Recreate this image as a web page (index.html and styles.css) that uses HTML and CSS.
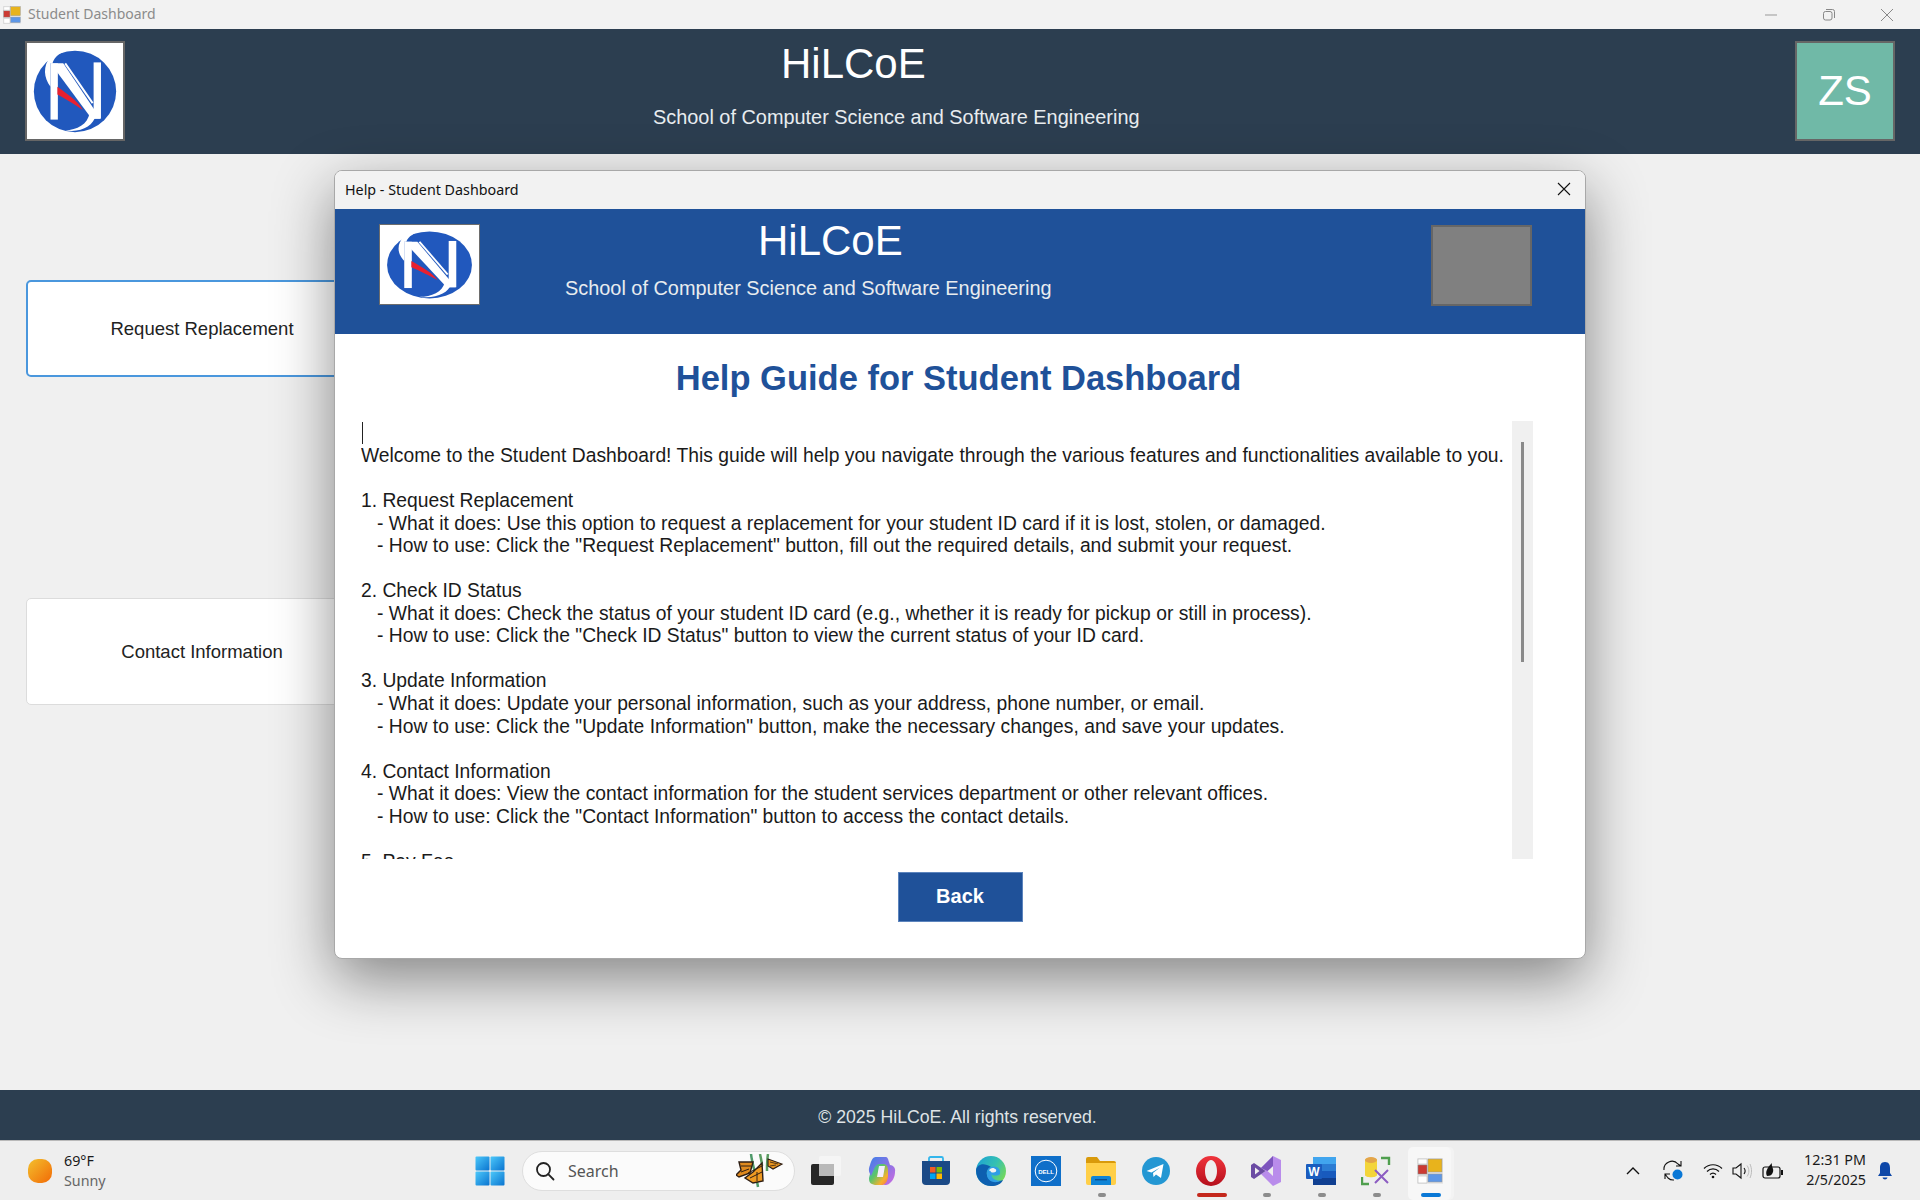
FILE: index.html
```html
<!DOCTYPE html>
<html>
<head>
<title>Student Dashboard</title>
<meta charset="UTF-8">
<link rel="stylesheet" href="styles.css">
</head>
<body>
<svg class="defs" width="0" height="0">
  <defs>
    <symbol id="logo" viewBox="0 0 98 99" preserveAspectRatio="none">
      <rect width="98" height="99" fill="#fff"/>
      <circle cx="49" cy="50" r="42" fill="#2158bd"/>
      <path d="M24 45C17 36 16 24 24 14C29 9 36 7 42 7C34 10 28 14 26 21H24Z" fill="#fff"/>
      <path d="M39 90C51 90 62 84 64 72L70 75C68 85 55 93 39 90Z" fill="#fff"/>
      <rect x="24" y="21" width="7.5" height="58" fill="#fff"/>
      <rect x="68" y="20" width="7.5" height="58" fill="#fff"/>
      <polygon points="24,21 37,21 75,78 66,78" fill="#fff"/>
      <line x1="39" y1="21" x2="67" y2="62" stroke="#fff" stroke-width="2"/>
      <path d="M31 45C42 53 52 60 57 69C50 64 40 58 31 53Z" fill="#e8202f"/>
    </symbol>
    <symbol id="appicon" viewBox="0 0 26 26">
      <rect x="0" y="0" width="26" height="26" fill="#e8e8e8"/>
      <rect x="1" y="7" width="9" height="9" fill="#cc3a33" stroke="#888" stroke-width=".6"/>
      <rect x="11" y="1" width="14" height="13" fill="#e8b31c" stroke="#999" stroke-width=".6"/>
      <rect x="11" y="16" width="14" height="8" fill="#5e97e6" stroke="#999" stroke-width=".6"/>
      <path d="M1 1H10V6H1ZM1 18H10V25H1Z" fill="#fff" stroke="#bbb" stroke-width=".6"/>
    </symbol>
    <linearGradient id="win" x1="0" y1="0" x2="1" y2="1"><stop offset="0" stop-color="#4cc8fa"/><stop offset="1" stop-color="#0a74d0"/></linearGradient>
    <linearGradient id="sun" x1="0" y1="0" x2="1" y2="1"><stop offset="0" stop-color="#f3c02d"/><stop offset="1" stop-color="#f26a06"/></linearGradient>
    <linearGradient id="copilot" x1="0" y1="0" x2="1" y2="1"><stop offset="0" stop-color="#2aa8ee"/><stop offset=".45" stop-color="#5cc46a"/><stop offset=".72" stop-color="#f8b02c"/><stop offset="1" stop-color="#ee4f6e"/></linearGradient>
    <linearGradient id="copilot2" x1="0" y1="0" x2="1" y2="1"><stop offset="0" stop-color="#3f7fe8"/><stop offset="1" stop-color="#d06ae0"/></linearGradient>
    <linearGradient id="edge" x1="0" y1="0" x2="1" y2=".6"><stop offset="0" stop-color="#1a9fd8"/><stop offset=".6" stop-color="#35c1b1"/><stop offset="1" stop-color="#71d75d"/></linearGradient>
    <linearGradient id="opera" x1="0" y1="0" x2="0" y2="1"><stop offset="0" stop-color="#f0343c"/><stop offset="1" stop-color="#b50f1c"/></linearGradient>
  </defs>
</svg>

<div class="window">
  <div class="titlebar">
    <svg class="title-icon"><use href="#appicon"/></svg>
    <span class="title-text">Student Dashboard</span>
    <div class="win-controls">
      <svg width="14" height="14" viewBox="0 0 14 14"><line x1="1" y1="7" x2="13" y2="7" stroke="#999"/></svg>
      <svg width="14" height="14" viewBox="0 0 14 14"><rect x="1.5" y="3.5" width="8.5" height="8.5" rx="2" fill="none" stroke="#888"/><path d="M4 1.5H10.5A2 2 0 0 1 12.5 3.5V10" fill="none" stroke="#888"/></svg>
      <svg width="14" height="14" viewBox="0 0 14 14"><path d="M1 1L13 13M13 1L1 13" stroke="#888"/></svg>
    </div>
  </div>

  <div class="header">
    <svg class="logo"><use href="#logo"/></svg>
    <div class="brand">
      <div class="brand-name">HiLCoE</div>
      <div class="brand-sub">School of Computer Science and Software Engineering</div>
    </div>
    <div class="avatar">ZS</div>
  </div>

  <div class="main">
    <button class="nav-btn nav-btn-focus">Request Replacement</button>
    <button class="nav-btn">Contact Information</button>
  </div>

  <div class="footer">© 2025 HiLCoE. All rights reserved.</div>
</div>

<div class="dialog">
  <div class="dialog-title">
    <span>Help - Student Dashboard</span>
    <svg width="14" height="14" viewBox="0 0 14 14"><path d="M1 1L13 13M13 1L1 13" stroke="#111" stroke-width="1.1"/></svg>
  </div>
  <div class="dialog-head">
    <svg class="dialog-logo"><use href="#logo"/></svg>
    <div class="dialog-brand">
      <div class="dialog-name">HiLCoE</div>
      <div class="dialog-sub">School of Computer Science and Software Engineering</div>
    </div>
    <div class="dialog-photo"></div>
  </div>
  <h1 class="help-title">Help Guide for Student Dashboard</h1>
  <div class="help-box">
    <div class="help-text"><span class="caret"></span>
<pre class="help-pre">Welcome to the Student Dashboard! This guide will help you navigate through the various features and functionalities available to you.

1. Request Replacement
   - What it does: Use this option to request a replacement for your student ID card if it is lost, stolen, or damaged.
   - How to use: Click the "Request Replacement" button, fill out the required details, and submit your request.

2. Check ID Status
   - What it does: Check the status of your student ID card (e.g., whether it is ready for pickup or still in process).
   - How to use: Click the "Check ID Status" button to view the current status of your ID card.

3. Update Information
   - What it does: Update your personal information, such as your address, phone number, or email.
   - How to use: Click the "Update Information" button, make the necessary changes, and save your updates.

4. Contact Information
   - What it does: View the contact information for the student services department or other relevant offices.
   - How to use: Click the "Contact Information" button to access the contact details.

5. Pay Fee</pre>
    </div>
    <div class="scrollbar"><div class="scroll-thumb"></div></div>
  </div>
  <div class="dialog-actions"><button class="back-btn">Back</button></div>
</div>

<div class="taskbar">
  <div class="weather">
    <svg width="24" height="24" viewBox="0 0 24 24"><rect width="24" height="24" rx="10" fill="url(#sun)"/></svg>
    <div class="weather-text">
      <div class="temp">69°F</div>
      <div class="cond">Sunny</div>
    </div>
  </div>

  <div class="task-btn">
    <svg width="30" height="30" viewBox="0 0 30 30"><rect x="0.5" y="0.5" width="14" height="14" rx="1" fill="url(#win)"/><rect x="15.5" y="0.5" width="14" height="14" rx="1" fill="url(#win)"/><rect x="0.5" y="15.5" width="14" height="14" rx="1" fill="url(#win)"/><rect x="15.5" y="15.5" width="14" height="14" rx="1" fill="url(#win)"/></svg>
  </div>

  <div class="search">
    <svg width="20" height="20" viewBox="0 0 20 20"><circle cx="8.5" cy="8.5" r="6.5" fill="none" stroke="#222" stroke-width="1.8"/><line x1="13.2" y1="13.2" x2="18.5" y2="18.5" stroke="#222" stroke-width="1.8" stroke-linecap="round"/></svg>
    <span class="search-text">Search</span>
    <svg class="butterflies" width="50" height="34" viewBox="0 0 50 34">
      <path d="M15 0C16 10 20 20 22 33" fill="none" stroke="#4f9a6a" stroke-width="2.5"/>
      <path d="M24 0C25 5 26 8 26 12M32 0C31 6 31 12 31 17" fill="none" stroke="#5b9d62" stroke-width="2.5"/>
      <path d="M3 8L17 8L14 19L3 23L0 21L5 16Z" fill="#e08a1e" stroke="#2e1e14" stroke-width="1.4"/>
      <path d="M26 9L27 27L17 29L9 24L17 18Z" fill="#ee9a22" stroke="#2e1e14" stroke-width="1.4"/>
      <path d="M12 19L26 12M14 24L26 18M21 18V27" stroke="#2e1e14" stroke-width="1"/>
      <path d="M5 12L15 12M5 18L13 15" stroke="#2e1e14" stroke-width="1"/>
      <path d="M32 5L46 10L37 15L32 12Z" fill="#e8951f" stroke="#2e1e14" stroke-width="1.1"/>
      <path d="M34 8L42 10M34 12L40 11" stroke="#2e1e14" stroke-width=".8"/>
    </svg>
  </div>

  <div class="task-apps">
    <div class="task-btn">
      <svg width="30" height="30" viewBox="0 0 30 30"><rect x="0" y="8" width="23" height="21" rx="2" fill="#262626"/><rect x="8" y="0" width="22" height="20" rx="2" fill="#f6f6f6" opacity=".85"/><rect x="8" y="8" width="15" height="12" fill="#b9b9b9"/></svg>
    </div>
    <div class="task-btn">
      <svg width="30" height="30" viewBox="0 0 30 30"><path d="M11 1H18C20 1 21 3 22 6L26 20C24 27 20 29 15 29H9C4 28 3 26 3 22L7 6C8 3 9 1 11 1Z" fill="url(#copilot)"/><path d="M10 1H19C22 1 22 3 23 6L24 9C27 9 30 12 29 16C29 20 27 25 24 27C22 29 20 29 19 29H17C20 28 22 24 22 20V14C22 10 20 8 17 8H14C11 8 9 10 8 13L5 20C3 16 2 14 4 9C5 6 6 1 10 1Z" fill="url(#copilot2)"/><path d="M13 10H19L17 21H11Z" fill="#f3eefc"/></svg>
    </div>
    <div class="task-btn">
      <svg width="30" height="30" viewBox="0 0 30 30"><path d="M8 6V2.5A1.5 1.5 0 0 1 9.5 1H20.5A1.5 1.5 0 0 1 22 2.5V6" fill="none" stroke="#33b6ec" stroke-width="1.8"/><path d="M1 5H29V25A4 4 0 0 1 25 29H5A4 4 0 0 1 1 25Z" fill="#1b4a86"/><rect x="9" y="11" width="5.5" height="5.5" fill="#ef5a24"/><rect x="15.5" y="11" width="5.5" height="5.5" fill="#7fba00"/><rect x="9" y="17.5" width="5.5" height="5.5" fill="#00a4ef"/><rect x="15.5" y="17.5" width="5.5" height="5.5" fill="#ffb900"/></svg>
    </div>
    <div class="task-btn">
      <svg width="30" height="30" viewBox="0 0 30 30"><circle cx="15" cy="15" r="15" fill="url(#edge)"/><path d="M0 14C0 24 7 30 15 30C21 30 25 28 27 24C20 27 12 25 11 19C10 15 12 12 15 11C8 6 1 8 0 14Z" fill="#0d5fb0"/><path d="M15 11C20 9 25 12 24 18C22 20 17 20 15.5 18C15 22 19 25 25 24.5C20 28 12 26 11 19.5C10.5 15 12 12 15 11Z" fill="#2f9ee6"/><path d="M13 14.5C14 11.5 18 11 20 13.5C21 15.5 19 17 16 16.5C15 16.2 14.5 15.5 14.5 15Z" fill="#f2f2f2"/></svg>
    </div>
    <div class="task-btn">
      <svg width="30" height="30" viewBox="0 0 30 30"><rect width="30" height="30" fill="#0f6fc9"/><circle cx="15" cy="15" r="10.8" fill="none" stroke="#fff" stroke-width="1"/><text x="15" y="17.5" text-anchor="middle" class="dell-text">DELL</text></svg>
    </div>
    <div class="task-btn">
      <svg width="30" height="30" viewBox="0 0 30 30"><path d="M0 3A2 2 0 0 1 2 1H11L14 5H28A2 2 0 0 1 30 7V10H0Z" fill="#d99a0b"/><path d="M0 7H30V27A2 2 0 0 1 28 29H2A2 2 0 0 1 0 27Z" fill="#ffcf48"/><path d="M5 29V22A2 2 0 0 1 7 20H23A2 2 0 0 1 25 22V29Z" fill="#0f84d6"/><rect x="9" y="23" width="12" height="1.4" fill="#0b4f90"/></svg>
      <span class="run-dot"></span>
    </div>
    <div class="task-btn">
      <svg width="30" height="30" viewBox="0 0 30 30"><circle cx="15" cy="15" r="14" fill="#2497d3"/><path d="M5.5 15L22.5 8L20 22L15 18.5L12.5 21L12 17L19 11.5L10.5 16.5Z" fill="#fff"/></svg>
    </div>
    <div class="task-btn">
      <svg width="30" height="30" viewBox="0 0 30 30"><path fill-rule="evenodd" d="M15 0A15 15 0 0 1 15 30A15 15 0 0 1 15 0ZM15 4C11.5 4 9 9 9 15C9 21 11.5 26 15 26C18.5 26 21 21 21 15C21 9 18.5 4 15 4Z" fill="url(#opera)"/></svg>
      <span class="run-dot run-dot-red"></span>
    </div>
    <div class="task-btn">
      <svg width="30" height="30" viewBox="0 0 30 30"><path d="M22 0L30 4V26L22 30L10 18L14.5 15L10 12ZM22 10L16.5 15L22 20Z" fill="#b98ceb"/><path d="M3 7L11 12.5L14.5 15L11 17.5L3 23L0 21V9ZM4 11.5V18.5L8.5 15Z" fill="#6b4ba3"/><path d="M22 0L10 12L16.5 15L22 10Z" fill="#7d55bd"/></svg>
      <span class="run-dot"></span>
    </div>
    <div class="task-btn">
      <svg width="30" height="30" viewBox="0 0 30 30"><rect x="7" y="1" width="23" height="7" fill="#41a5ee"/><rect x="7" y="8" width="23" height="7" fill="#2b7cd3"/><rect x="7" y="15" width="23" height="7" fill="#185abd"/><rect x="7" y="22" width="23" height="7" fill="#103f91"/><rect x="0" y="8" width="16" height="15" rx="1" fill="#1a5cbe"/><text x="8" y="20" text-anchor="middle" class="word-text">W</text></svg>
      <span class="run-dot"></span>
    </div>
    <div class="task-btn">
      <svg width="30" height="30" viewBox="0 0 30 30"><path d="M4 4C4 1 16 1 16 4V19C16 22 4 22 4 19Z" fill="#f3d53a"/><ellipse cx="10" cy="4" rx="6" ry="3" fill="#e3a54a"/><path d="M20 2H28V9M1 21V28H8" fill="none" stroke="#4f9f4e" stroke-width="2.4"/><path d="M14 14L27 27M27 14L14 27" stroke="#8c5cc2" stroke-width="2"/></svg>
      <span class="run-dot"></span>
    </div>
    <div class="task-btn task-btn-active">
      <svg width="26" height="26"><use href="#appicon"/></svg>
      <span class="run-dot run-dot-blue"></span>
    </div>
  </div>

  <div class="tray">
    <svg class="tray-chevron" width="14" height="9" viewBox="0 0 14 9"><path d="M1 8L7 2L13 8" fill="none" stroke="#111" stroke-width="1.4"/></svg>
    <svg class="tray-sync" width="22" height="22" viewBox="0 0 22 22"><path d="M2 10A8 8 0 0 1 16 4L19 6M19 1V6H14M3 19V14H8M3 14L6 18A8 8 0 0 0 12 20" fill="none" stroke="#111" stroke-width="1.1"/><circle cx="15.5" cy="14.5" r="5" fill="#0a78d6"/></svg>
    <svg class="tray-wifi" width="20" height="16" viewBox="0 0 20 16"><path d="M1 5.5C6 .5 14 .5 19 5.5M4 8.5C7.5 5 12.5 5 16 8.5M7 11.5C8.8 9.8 11.2 9.8 13 11.5" fill="none" stroke="#111" stroke-width="1.2"/><circle cx="10" cy="14" r="1.3" fill="#111"/></svg>
    <svg class="tray-vol" width="20" height="18" viewBox="0 0 20 18"><path d="M1 6H4L9 2V16L4 12H1Z" fill="none" stroke="#111" stroke-width="1.1"/><path d="M12 6C13.5 8 13.5 10 12 12" fill="none" stroke="#111" stroke-width="1.1"/><path d="M15 3.5C17.5 7 17.5 11 15 14.5M18 2C20 7 20 11 18 16" fill="none" stroke="#bbb" stroke-width="1"/></svg>
    <svg class="tray-batt" width="22" height="18" viewBox="0 0 22 18"><rect x="1" y="5" width="17" height="11" rx="2" fill="none" stroke="#111" stroke-width="1.2"/><rect x="19" y="8" width="2" height="5" fill="#111"/><path d="M5 14C3 10 5 6 10 1C9 5 12 6 11 10C10 13 8 14 5 14Z" fill="#111"/></svg>
    <div class="clock">
      <div>12:31 PM</div>
      <div>2/5/2025</div>
    </div>
    <svg class="tray-bell" width="16" height="20" viewBox="0 0 16 20"><path d="M8 1C4 1 3 4 3 7V12L1 15H15L13 12V7C13 4 12 1 8 1Z" fill="#0d47a8"/><path d="M5.5 16.5H10.5C10 19 6 19 5.5 16.5Z" fill="#0d47a8"/></svg>
  </div>
</div>
</body>
</html>
```

FILE: styles.css
```css
* { box-sizing: border-box; }
body {
  margin: 0;
  width: 1920px;
  height: 1200px;
  overflow: hidden;
  position: relative;
  font-family: "Liberation Sans", Arial, sans-serif;
  background: #f0f0f0;
}
.defs { position: absolute; }

/* main window */
.window {
  height: 1140px;
  display: flex;
  flex-direction: column;
}
.titlebar {
  height: 29px;
  display: flex;
  align-items: center;
  padding-left: 3px;
  background: #f2f2f2;
}
.title-icon { width: 18px; height: 18px; }
.title-text {
  margin-left: 7px;
  padding-bottom: 2px;
  font: 14px "Noto Sans", sans-serif;
  color: #8b8b8b;
}
.win-controls {
  margin-left: auto;
  padding-right: 26px;
  display: flex;
  gap: 44px;
}
.header {
  height: 125px;
  background: #2c3e50;
  display: flex;
  align-items: flex-start;
  padding: 12px 25px 0;
  color: #fff;
}
.logo {
  width: 100px;
  height: 100px;
  border: 2px solid #666;
}
.brand { margin-left: 528px; margin-top: 1px; color: #e8ecef; }
.brand-name {
  margin-left: 128px;
  font-size: 42px;
  line-height: 44px;
  color: #fff;
}
.brand-sub {
  margin-top: 18px;
  font-size: 19.9px;
  line-height: 26px;
}
.avatar {
  margin-left: auto;
  width: 100px;
  height: 100px;
  background: #70b9a7;
  border: 2px solid #666;
  display: flex;
  align-items: center;
  justify-content: center;
  font-size: 42px;
}
.main {
  flex: 1;
  padding: 126px 0 0 26px;
  display: flex;
  flex-direction: column;
  align-items: flex-start;
}
.nav-btn {
  width: 352px;
  height: 107px;
  padding-top: 2px;
  background: #fff;
  border: 1px solid #dcdcdc;
  border-radius: 5px;
  font: 18.5px "Liberation Sans", Arial, sans-serif;
  color: #222;
}
.nav-btn-focus {
  height: 97px;
  margin-bottom: 221px;
  border: 2px solid #4a97dd;
}
.footer {
  height: 50px;
  padding: 4px 5px 0 0;
  background: #2c3e50;
  color: #dfe3e6;
  font-size: 17.7px;
  display: flex;
  align-items: center;
  justify-content: center;
}

/* help dialog, floats over the window */
.dialog {
  position: absolute;
  left: 334px;
  top: 170px;
  width: 1252px;
  height: 789px;
  background: #fff;
  border: 1px solid #a8a8a8;
  border-radius: 8px;
  overflow: hidden;
  box-shadow: 0 20px 60px rgba(0, 0, 0, 0.45);
}
.dialog-title {
  height: 38px;
  padding: 0 14px 2px 10px;
  background: #f2f2f2;
  display: flex;
  align-items: center;
  justify-content: space-between;
  font: 14.3px "Noto Sans", sans-serif;
  color: #111;
}
.dialog-head {
  height: 125px;
  background: #1f5199;
  display: flex;
  align-items: flex-start;
  padding: 15px 53px 0 44px;
  color: #e8ecef;
}
.dialog-logo {
  width: 101px;
  height: 81px;
  border: 1px solid #6d6d6d;
}
.dialog-brand { margin-left: 85px; }
.dialog-name {
  margin-left: 193px;
  margin-top: -5px;
  font-size: 42px;
  line-height: 44px;
  color: #fff;
}
.dialog-sub {
  margin-top: 12px;
  font-size: 19.9px;
  line-height: 26px;
}
.dialog-photo {
  margin-left: auto;
  margin-top: 1px;
  width: 101px;
  height: 81px;
  background: #808080;
  border: 2px solid #666;
}
.help-title {
  margin: 0;
  height: 87px;
  padding: 23px 3px 0 0;
  text-align: center;
  font-size: 34.5px;
  line-height: 42px;
  color: #1f5199;
}
.help-box {
  height: 438px;
  margin: 0 52px 0 26px;
  display: flex;
  overflow: hidden;
}
.help-text {
  flex: 1;
  overflow: hidden;
  position: relative;
  padding-top: 24px;
}
.caret {
  position: absolute;
  left: 1px;
  top: 1px;
  width: 1px;
  height: 22px;
  background: #222;
}
.help-pre {
  margin: 0;
  font: 19.3px/22.55px "Liberation Sans", Arial, sans-serif;
  color: #1a1a1a;
}
.scrollbar {
  width: 21px;
  background: #f0f0f0;
  padding: 21px 0 0 9px;
}
.scroll-thumb {
  width: 3px;
  height: 220px;
  background: #8a8a8a;
}
.dialog-actions {
  margin-top: 13px;
  display: flex;
  justify-content: center;
}
.back-btn {
  width: 125px;
  height: 50px;
  padding-bottom: 3px;
  background: #1f5199;
  border: 1px solid #5c84bd;
  color: #fff;
  font: bold 20px "Liberation Sans", Arial, sans-serif;
}

/* taskbar */
.taskbar {
  height: 60px;
  background: #eeeeee;
  border-top: 1px solid #b9b9b9;
  display: flex;
  align-items: center;
  font-family: "Noto Sans", sans-serif;
}
.weather {
  width: 462px;
  padding-left: 28px;
  display: flex;
  align-items: center;
  gap: 12px;
}
.weather-text { line-height: 20px; font-size: 14.3px; }
.temp { color: #1a1a1a; }
.cond { color: #666; }
.task-btn {
  width: 55px;
  height: 59px;
  position: relative;
  display: flex;
  align-items: center;
  justify-content: center;
  flex-shrink: 0;
}
.task-btn-active::before {
  content: "";
  position: absolute;
  left: 4px;
  right: 8px;
  top: 6px;
  bottom: 0;
  background: #f7f7f7;
  border-radius: 5px;
  box-shadow: 3px 0 0 #f3f3f3;
}
.task-btn-active svg { position: relative; left: -1px; }
.run-dot {
  position: absolute;
  left: 24px;
  bottom: 3px;
  width: 8px;
  height: 4px;
  border-radius: 2px;
  background: #8c8c8c;
}
.run-dot-red { left: 13px; width: 30px; background: #c4281c; }
.run-dot-blue { left: 17px; width: 20px; background: #0a78d6; }
.search {
  width: 273px;
  height: 40px;
  margin-left: 5px;
  margin-right: 3.5px;
  background: #fbfbfb;
  border: 1px solid #dedede;
  border-radius: 20px;
  display: flex;
  align-items: center;
  padding-left: 12px;
  flex-shrink: 0;
  color: #555;
  font-size: 16px;
}
.search-text { margin-left: 13px; }
.butterflies { margin-left: auto; margin-right: 8px; }
.task-apps { display: flex; }
.dell-text { font: bold 6px "Liberation Sans", sans-serif; fill: #fff; }
.word-text { font: bold 12px "Liberation Sans", sans-serif; fill: #fff; }
.tray {
  flex: 1;
  height: 59px;
  display: flex;
  align-items: center;
  padding-left: 167.5px;
}
.tray-chevron { flex-shrink: 0; }
.tray-sync { margin-left: 22px; }
.tray-wifi { margin-left: 19px; }
.tray-vol { margin-left: 9px; }
.tray-batt { margin-left: 10px; }
.clock {
  margin-left: 10px;
  padding-bottom: 2px;
  width: 72px;
  text-align: right;
  font-size: 14.3px;
  line-height: 20px;
  color: #1a1a1a;
  white-space: nowrap;
}
.tray-bell { margin-left: 11px; }
```
